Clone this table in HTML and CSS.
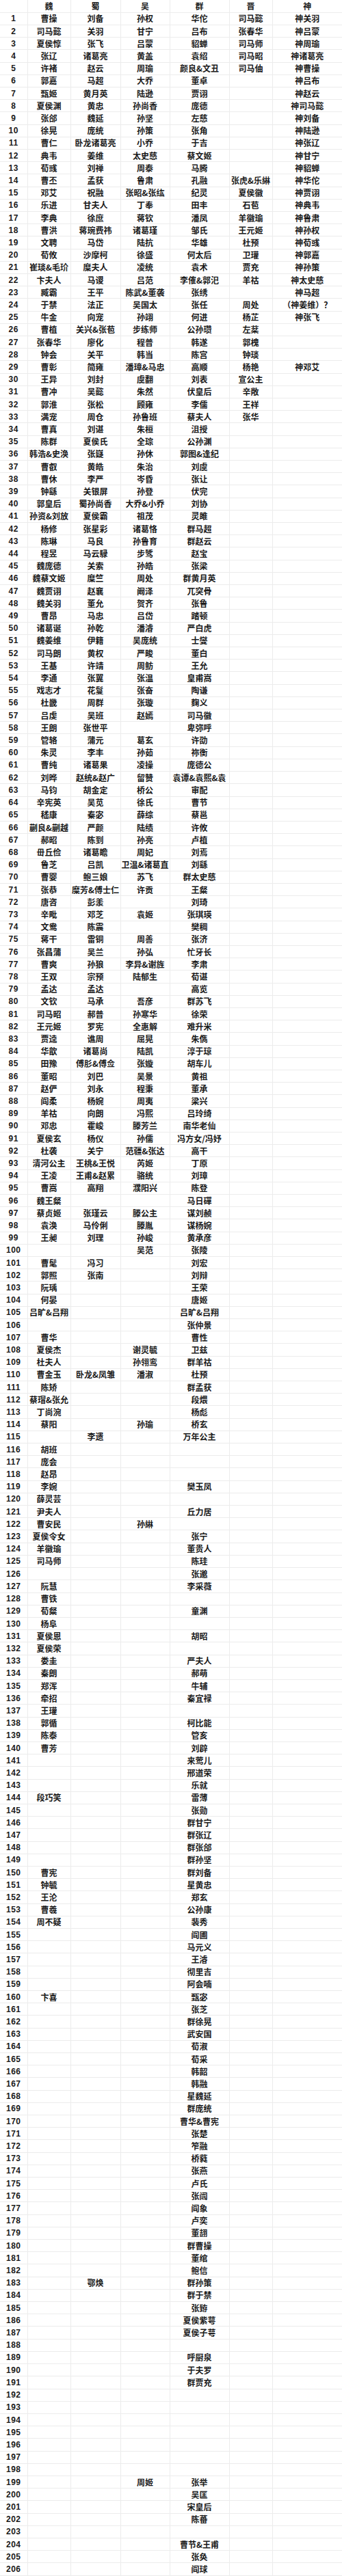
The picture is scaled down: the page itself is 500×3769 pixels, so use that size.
FILE: index.html
```html
<!DOCTYPE html>
<html lang="zh">
<head>
<meta charset="utf-8">
<title>武将列表</title>
<link rel="stylesheet" href="styles.css">
</head>
<body>
<table class="sheet">
<colgroup><col class="c-no"><col class="c-wei"><col class="c-shu"><col class="c-wu"><col class="c-qun"><col class="c-jin"><col class="c-shen"></colgroup>
<thead>
<tr><th></th><th>魏</th><th>蜀</th><th>吴</th><th>群</th><th>晋</th><th>神</th></tr>
</thead>
<tbody>
<tr><td>1</td><td>曹操</td><td>刘备</td><td>孙权</td><td>华佗</td><td>司马懿</td><td>神关羽</td></tr>
<tr><td>2</td><td>司马懿</td><td>关羽</td><td>甘宁</td><td>吕布</td><td>张春华</td><td>神吕蒙</td></tr>
<tr><td>3</td><td>夏侯惇</td><td>张飞</td><td>吕蒙</td><td>貂蝉</td><td>司马师</td><td>神周瑜</td></tr>
<tr><td>4</td><td>张辽</td><td>诸葛亮</td><td>黄盖</td><td>袁绍</td><td>司马昭</td><td>神诸葛亮</td></tr>
<tr><td>5</td><td>许褚</td><td>赵云</td><td>周瑜</td><td>颜良&amp;文丑</td><td>司马伷</td><td>神曹操</td></tr>
<tr><td>6</td><td>郭嘉</td><td>马超</td><td>大乔</td><td>董卓</td><td></td><td>神吕布</td></tr>
<tr><td>7</td><td>甄姬</td><td>黄月英</td><td>陆逊</td><td>贾诩</td><td></td><td>神赵云</td></tr>
<tr><td>8</td><td>夏侯渊</td><td>黄忠</td><td>孙尚香</td><td>庞德</td><td></td><td>神司马懿</td></tr>
<tr><td>9</td><td>张郃</td><td>魏延</td><td>孙坚</td><td>左慈</td><td></td><td>神刘备</td></tr>
<tr><td>10</td><td>徐晃</td><td>庞统</td><td>孙策</td><td>张角</td><td></td><td>神陆逊</td></tr>
<tr><td>11</td><td>曹仁</td><td>卧龙诸葛亮</td><td>小乔</td><td>于吉</td><td></td><td>神张辽</td></tr>
<tr><td>12</td><td>典韦</td><td>姜维</td><td>太史慈</td><td>蔡文姬</td><td></td><td>神甘宁</td></tr>
<tr><td>13</td><td>荀彧</td><td>刘禅</td><td>周泰</td><td>马腾</td><td></td><td>神貂蝉</td></tr>
<tr><td>14</td><td>曹丕</td><td>孟获</td><td>鲁肃</td><td>孔融</td><td>张虎&amp;乐綝</td><td>神华佗</td></tr>
<tr><td>15</td><td>邓艾</td><td>祝融</td><td>张昭&amp;张纮</td><td>纪灵</td><td>夏侯徽</td><td>神贾诩</td></tr>
<tr><td>16</td><td>乐进</td><td>甘夫人</td><td>丁奉</td><td>田丰</td><td>石苞</td><td>神典韦</td></tr>
<tr><td>17</td><td>李典</td><td>徐庶</td><td>蒋钦</td><td>潘凤</td><td>羊徽瑜</td><td>神鲁肃</td></tr>
<tr><td>18</td><td>曹洪</td><td>蒋琬费祎</td><td>诸葛瑾</td><td>邹氏</td><td>王元姬</td><td>神孙权</td></tr>
<tr><td>19</td><td>文聘</td><td>马岱</td><td>陆抗</td><td>华雄</td><td>杜预</td><td>神荀彧</td></tr>
<tr><td>20</td><td>荀攸</td><td>沙摩柯</td><td>徐盛</td><td>何太后</td><td>卫瓘</td><td>神郭嘉</td></tr>
<tr><td>21</td><td>崔琰&amp;毛玠</td><td>糜夫人</td><td>凌统</td><td>袁术</td><td>贾充</td><td>神孙策</td></tr>
<tr><td>22</td><td>卞夫人</td><td>马谡</td><td>吕范</td><td>李傕&amp;郭汜</td><td>羊祜</td><td>神太史慈</td></tr>
<tr><td>23</td><td>臧霸</td><td>王平</td><td>陈武&amp;董袭</td><td>张绣</td><td></td><td>神马超</td></tr>
<tr><td>24</td><td>于禁</td><td>法正</td><td>吴国太</td><td>张任</td><td>周处</td><td>（神姜维）？</td></tr>
<tr><td>25</td><td>牛金</td><td>向宠</td><td>孙翊</td><td>何进</td><td>杨芷</td><td>神张飞</td></tr>
<tr><td>26</td><td>曹植</td><td>关兴&amp;张苞</td><td>步练师</td><td>公孙瓒</td><td>左棻</td><td></td></tr>
<tr><td>27</td><td>张春华</td><td>廖化</td><td>程普</td><td>韩遂</td><td>郭槐</td><td></td></tr>
<tr><td>28</td><td>钟会</td><td>关平</td><td>韩当</td><td>陈宫</td><td>钟琰</td><td></td></tr>
<tr><td>29</td><td>曹彰</td><td>简雍</td><td>潘璋&amp;马忠</td><td>高顺</td><td>杨艳</td><td>神邓艾</td></tr>
<tr><td>30</td><td>王异</td><td>刘封</td><td>虞翻</td><td>刘表</td><td>宣公主</td><td></td></tr>
<tr><td>31</td><td>曹冲</td><td>吴懿</td><td>朱然</td><td>伏皇后</td><td>辛敞</td><td></td></tr>
<tr><td>32</td><td>郭淮</td><td>张松</td><td>顾雍</td><td>李儒</td><td>王祥</td><td></td></tr>
<tr><td>33</td><td>满宠</td><td>周仓</td><td>孙鲁班</td><td>蔡夫人</td><td>张华</td><td></td></tr>
<tr><td>34</td><td>曹真</td><td>刘谌</td><td>朱桓</td><td>沮授</td><td></td><td></td></tr>
<tr><td>35</td><td>陈群</td><td>夏侯氏</td><td>全琮</td><td>公孙渊</td><td></td><td></td></tr>
<tr><td>36</td><td>韩浩&amp;史涣</td><td>张嶷</td><td>孙休</td><td>郭图&amp;逢纪</td><td></td><td></td></tr>
<tr><td>37</td><td>曹叡</td><td>黄皓</td><td>朱治</td><td>刘虞</td><td></td><td></td></tr>
<tr><td>38</td><td>曹休</td><td>李严</td><td>岑昏</td><td>张让</td><td></td><td></td></tr>
<tr><td>39</td><td>钟繇</td><td>关银屏</td><td>孙登</td><td>伏完</td><td></td><td></td></tr>
<tr><td>40</td><td>郭皇后</td><td>蜀孙尚香</td><td>大乔&amp;小乔</td><td>刘协</td><td></td><td></td></tr>
<tr><td>41</td><td>孙资&amp;刘放</td><td>夏侯霸</td><td>祖茂</td><td>灵雎</td><td></td><td></td></tr>
<tr><td>42</td><td>杨修</td><td>张星彩</td><td>诸葛恪</td><td>群马超</td><td></td><td></td></tr>
<tr><td>43</td><td>陈琳</td><td>马良</td><td>孙鲁育</td><td>群赵云</td><td></td><td></td></tr>
<tr><td>44</td><td>程昱</td><td>马云騄</td><td>步骘</td><td>赵宝</td><td></td><td></td></tr>
<tr><td>45</td><td>魏庞德</td><td>关索</td><td>孙皓</td><td>张梁</td><td></td><td></td></tr>
<tr><td>46</td><td>魏蔡文姬</td><td>糜竺</td><td>周处</td><td>群黄月英</td><td></td><td></td></tr>
<tr><td>47</td><td>魏贾诩</td><td>赵襄</td><td>阚泽</td><td>兀突骨</td><td></td><td></td></tr>
<tr><td>48</td><td>魏关羽</td><td>董允</td><td>贺齐</td><td>张鲁</td><td></td><td></td></tr>
<tr><td>49</td><td>曹昂</td><td>马忠</td><td>吕岱</td><td>踏顿</td><td></td><td></td></tr>
<tr><td>50</td><td>诸葛诞</td><td>孙乾</td><td>潘濬</td><td>严白虎</td><td></td><td></td></tr>
<tr><td>51</td><td>魏姜维</td><td>伊籍</td><td>吴庞统</td><td>士燮</td><td></td><td></td></tr>
<tr><td>52</td><td>司马朗</td><td>黄权</td><td>严畯</td><td>董白</td><td></td><td></td></tr>
<tr><td>53</td><td>王基</td><td>许靖</td><td>周鲂</td><td>王允</td><td></td><td></td></tr>
<tr><td>54</td><td>李通</td><td>张翼</td><td>张温</td><td>皇甫嵩</td><td></td><td></td></tr>
<tr><td>55</td><td>戏志才</td><td>花鬘</td><td>张奋</td><td>陶谦</td><td></td><td></td></tr>
<tr><td>56</td><td>杜畿</td><td>周群</td><td>张璇</td><td>麴义</td><td></td><td></td></tr>
<tr><td>57</td><td>吕虔</td><td>吴班</td><td>赵嫣</td><td>司马徽</td><td></td><td></td></tr>
<tr><td>58</td><td>王朗</td><td>张世平</td><td></td><td>卑弥呼</td><td></td><td></td></tr>
<tr><td>59</td><td>管辂</td><td>蒲元</td><td>葛玄</td><td>许劭</td><td></td><td></td></tr>
<tr><td>60</td><td>朱灵</td><td>李丰</td><td>孙茹</td><td>祢衡</td><td></td><td></td></tr>
<tr><td>61</td><td>曹纯</td><td>诸葛果</td><td>凌操</td><td>庞德公</td><td></td><td></td></tr>
<tr><td>62</td><td>刘晔</td><td>赵统&amp;赵广</td><td>留赞</td><td>袁谭&amp;袁熙&amp;袁</td><td></td><td></td></tr>
<tr><td>63</td><td>马钧</td><td>胡金定</td><td>桥公</td><td>审配</td><td></td><td></td></tr>
<tr><td>64</td><td>辛宪英</td><td>吴苋</td><td>徐氏</td><td>曹节</td><td></td><td></td></tr>
<tr><td>65</td><td>嵇康</td><td>秦宓</td><td>薛综</td><td>蔡邕</td><td></td><td></td></tr>
<tr><td>66</td><td>蒯良&amp;蒯越</td><td>严颜</td><td>陆绩</td><td>许攸</td><td></td><td></td></tr>
<tr><td>67</td><td>郝昭</td><td>陈到</td><td>孙亮</td><td>卢植</td><td></td><td></td></tr>
<tr><td>68</td><td>毌丘俭</td><td>诸葛瞻</td><td>周妃</td><td>刘焉</td><td></td><td></td></tr>
<tr><td>69</td><td>鲁芝</td><td>吕凯</td><td>卫温&amp;诸葛直</td><td>刘繇</td><td></td><td></td></tr>
<tr><td>70</td><td>曹婴</td><td>鲍三娘</td><td>苏飞</td><td>群太史慈</td><td></td><td></td></tr>
<tr><td>71</td><td>张恭</td><td>糜芳&amp;傅士仁</td><td>许贡</td><td>王粲</td><td></td><td></td></tr>
<tr><td>72</td><td>唐咨</td><td>彭羕</td><td></td><td>刘琦</td><td></td><td></td></tr>
<tr><td>73</td><td>辛毗</td><td>邓芝</td><td>袁姬</td><td>张琪瑛</td><td></td><td></td></tr>
<tr><td>74</td><td>文鸯</td><td>陈震</td><td></td><td>樊稠</td><td></td><td></td></tr>
<tr><td>75</td><td>蒋干</td><td>雷铜</td><td>周善</td><td>张济</td><td></td><td></td></tr>
<tr><td>76</td><td>张昌蒲</td><td>吴兰</td><td>孙弘</td><td>忙牙长</td><td></td><td></td></tr>
<tr><td>77</td><td>曹爽</td><td>孙狼</td><td>李异&amp;谢旌</td><td>李肃</td><td></td><td></td></tr>
<tr><td>78</td><td>王双</td><td>宗预</td><td>陆郁生</td><td>荀谌</td><td></td><td></td></tr>
<tr><td>79</td><td>孟达</td><td>孟达</td><td></td><td>高览</td><td></td><td></td></tr>
<tr><td>80</td><td>文钦</td><td>马承</td><td>吾彦</td><td>群苏飞</td><td></td><td></td></tr>
<tr><td>81</td><td>司马昭</td><td>郝普</td><td>孙寒华</td><td>徐荣</td><td></td><td></td></tr>
<tr><td>82</td><td>王元姬</td><td>罗宪</td><td>全惠解</td><td>难升米</td><td></td><td></td></tr>
<tr><td>83</td><td>贾逵</td><td>谯周</td><td>屈晃</td><td>朱儁</td><td></td><td></td></tr>
<tr><td>84</td><td>华歆</td><td>诸葛尚</td><td>陆凯</td><td>淳于琼</td><td></td><td></td></tr>
<tr><td>85</td><td>田豫</td><td>傅肜&amp;傅佥</td><td>张嫙</td><td>胡车儿</td><td></td><td></td></tr>
<tr><td>86</td><td>董昭</td><td>刘巴</td><td>吴景</td><td>黄祖</td><td></td><td></td></tr>
<tr><td>87</td><td>赵俨</td><td>刘永</td><td>程秉</td><td>董承</td><td></td><td></td></tr>
<tr><td>88</td><td>阎柔</td><td>杨婉</td><td>周夷</td><td>梁兴</td><td></td><td></td></tr>
<tr><td>89</td><td>羊祜</td><td>向朗</td><td>冯熙</td><td>吕玲绮</td><td></td><td></td></tr>
<tr><td>90</td><td>邓忠</td><td>霍峻</td><td>滕芳兰</td><td>南华老仙</td><td></td><td></td></tr>
<tr><td>91</td><td>夏侯玄</td><td>杨仪</td><td>孙儒</td><td>冯方女/冯妤</td><td></td><td></td></tr>
<tr><td>92</td><td>杜袭</td><td>关宁</td><td>范疆&amp;张达</td><td>高干</td><td></td><td></td></tr>
<tr><td>93</td><td>清河公主</td><td>王桃&amp;王悦</td><td>芮姬</td><td>丁原</td><td></td><td></td></tr>
<tr><td>94</td><td>王凌</td><td>王甫&amp;赵累</td><td>骆统</td><td>刘璋</td><td></td><td></td></tr>
<tr><td>95</td><td>曹嵩</td><td>高翔</td><td>濮阳兴</td><td>陈登</td><td></td><td></td></tr>
<tr><td>96</td><td>魏王粲</td><td></td><td></td><td>马日磾</td><td></td><td></td></tr>
<tr><td>97</td><td>蔡贞姬</td><td>张瑾云</td><td>滕公主</td><td>谋刘赪</td><td></td><td></td></tr>
<tr><td>98</td><td>袁涣</td><td>马伶俐</td><td>滕胤</td><td>谋杨婉</td><td></td><td></td></tr>
<tr><td>99</td><td>王昶</td><td>刘理</td><td>孙峻</td><td>黄承彦</td><td></td><td></td></tr>
<tr><td>100</td><td></td><td></td><td>吴范</td><td>张陵</td><td></td><td></td></tr>
<tr><td>101</td><td>曹髦</td><td>冯习</td><td></td><td>刘宏</td><td></td><td></td></tr>
<tr><td>102</td><td>郭照</td><td>张南</td><td></td><td>刘辩</td><td></td><td></td></tr>
<tr><td>103</td><td>阮瑀</td><td></td><td></td><td>王荣</td><td></td><td></td></tr>
<tr><td>104</td><td>何晏</td><td></td><td></td><td>唐姬</td><td></td><td></td></tr>
<tr><td>105</td><td>吕旷&amp;吕翔</td><td></td><td></td><td>吕旷&amp;吕翔</td><td></td><td></td></tr>
<tr><td>106</td><td></td><td></td><td></td><td>张仲景</td><td></td><td></td></tr>
<tr><td>107</td><td>曹华</td><td></td><td></td><td>曹性</td><td></td><td></td></tr>
<tr><td>108</td><td>夏侯杰</td><td></td><td>谢灵毓</td><td>卫兹</td><td></td><td></td></tr>
<tr><td>109</td><td>杜夫人</td><td></td><td>孙翎鸾</td><td>群羊祜</td><td></td><td></td></tr>
<tr><td>110</td><td>曹金玉</td><td>卧龙&amp;凤雏</td><td>潘淑</td><td>杜预</td><td></td><td></td></tr>
<tr><td>111</td><td>陈矫</td><td></td><td></td><td>群孟获</td><td></td><td></td></tr>
<tr><td>112</td><td>蔡瑁&amp;张允</td><td></td><td></td><td>段煨</td><td></td><td></td></tr>
<tr><td>113</td><td>丁尚涴</td><td></td><td></td><td>杨彪</td><td></td><td></td></tr>
<tr><td>114</td><td>蔡阳</td><td></td><td>孙瑜</td><td>桥玄</td><td></td><td></td></tr>
<tr><td>115</td><td></td><td>李遗</td><td></td><td>万年公主</td><td></td><td></td></tr>
<tr><td>116</td><td>胡班</td><td></td><td></td><td></td><td></td><td></td></tr>
<tr><td>117</td><td>庞会</td><td></td><td></td><td></td><td></td><td></td></tr>
<tr><td>118</td><td>赵昂</td><td></td><td></td><td></td><td></td><td></td></tr>
<tr><td>119</td><td>李婉</td><td></td><td></td><td>樊玉凤</td><td></td><td></td></tr>
<tr><td>120</td><td>薛灵芸</td><td></td><td></td><td></td><td></td><td></td></tr>
<tr><td>121</td><td>尹夫人</td><td></td><td></td><td>丘力居</td><td></td><td></td></tr>
<tr><td>122</td><td>曹安民</td><td></td><td>孙綝</td><td></td><td></td><td></td></tr>
<tr><td>123</td><td>夏侯令女</td><td></td><td></td><td>张宁</td><td></td><td></td></tr>
<tr><td>124</td><td>羊徽瑜</td><td></td><td></td><td>董贵人</td><td></td><td></td></tr>
<tr><td>125</td><td>司马师</td><td></td><td></td><td>陈珪</td><td></td><td></td></tr>
<tr><td>126</td><td></td><td></td><td></td><td>张邈</td><td></td><td></td></tr>
<tr><td>127</td><td>阮慧</td><td></td><td></td><td>李采薇</td><td></td><td></td></tr>
<tr><td>128</td><td>曹铁</td><td></td><td></td><td></td><td></td><td></td></tr>
<tr><td>129</td><td>荀粲</td><td></td><td></td><td>童渊</td><td></td><td></td></tr>
<tr><td>130</td><td>杨阜</td><td></td><td></td><td></td><td></td><td></td></tr>
<tr><td>131</td><td>夏侯恩</td><td></td><td></td><td>胡昭</td><td></td><td></td></tr>
<tr><td>132</td><td>夏侯荣</td><td></td><td></td><td></td><td></td><td></td></tr>
<tr><td>133</td><td>娄圭</td><td></td><td></td><td>严夫人</td><td></td><td></td></tr>
<tr><td>134</td><td>秦朗</td><td></td><td></td><td>郝萌</td><td></td><td></td></tr>
<tr><td>135</td><td>郑浑</td><td></td><td></td><td>牛辅</td><td></td><td></td></tr>
<tr><td>136</td><td>牵招</td><td></td><td></td><td>秦宜禄</td><td></td><td></td></tr>
<tr><td>137</td><td>王瓘</td><td></td><td></td><td></td><td></td><td></td></tr>
<tr><td>138</td><td>郭循</td><td></td><td></td><td>柯比能</td><td></td><td></td></tr>
<tr><td>139</td><td>陈泰</td><td></td><td></td><td>管亥</td><td></td><td></td></tr>
<tr><td>140</td><td>曹芳</td><td></td><td></td><td>刘辟</td><td></td><td></td></tr>
<tr><td>141</td><td></td><td></td><td></td><td>来莺儿</td><td></td><td></td></tr>
<tr><td>142</td><td></td><td></td><td></td><td>邢道荣</td><td></td><td></td></tr>
<tr><td>143</td><td></td><td></td><td></td><td>乐就</td><td></td><td></td></tr>
<tr><td>144</td><td>段巧笑</td><td></td><td></td><td>雷薄</td><td></td><td></td></tr>
<tr><td>145</td><td></td><td></td><td></td><td>张勋</td><td></td><td></td></tr>
<tr><td>146</td><td></td><td></td><td></td><td>群甘宁</td><td></td><td></td></tr>
<tr><td>147</td><td></td><td></td><td></td><td>群张辽</td><td></td><td></td></tr>
<tr><td>148</td><td></td><td></td><td></td><td>群张郃</td><td></td><td></td></tr>
<tr><td>149</td><td></td><td></td><td></td><td>群孙坚</td><td></td><td></td></tr>
<tr><td>150</td><td>曹宪</td><td></td><td></td><td>群刘备</td><td></td><td></td></tr>
<tr><td>151</td><td>钟毓</td><td></td><td></td><td>星黄忠</td><td></td><td></td></tr>
<tr><td>152</td><td>王沦</td><td></td><td></td><td>郑玄</td><td></td><td></td></tr>
<tr><td>153</td><td>曹羲</td><td></td><td></td><td>公孙康</td><td></td><td></td></tr>
<tr><td>154</td><td>周不疑</td><td></td><td></td><td>裴秀</td><td></td><td></td></tr>
<tr><td>155</td><td></td><td></td><td></td><td>阎圃</td><td></td><td></td></tr>
<tr><td>156</td><td></td><td></td><td></td><td>马元义</td><td></td><td></td></tr>
<tr><td>157</td><td></td><td></td><td></td><td>王濬</td><td></td><td></td></tr>
<tr><td>158</td><td></td><td></td><td></td><td>彻里吉</td><td></td><td></td></tr>
<tr><td>159</td><td></td><td></td><td></td><td>阿会喃</td><td></td><td></td></tr>
<tr><td>160</td><td>卞喜</td><td></td><td></td><td>甄宓</td><td></td><td></td></tr>
<tr><td>161</td><td></td><td></td><td></td><td>张芝</td><td></td><td></td></tr>
<tr><td>162</td><td></td><td></td><td></td><td>群徐晃</td><td></td><td></td></tr>
<tr><td>163</td><td></td><td></td><td></td><td>武安国</td><td></td><td></td></tr>
<tr><td>164</td><td></td><td></td><td></td><td>荀淑</td><td></td><td></td></tr>
<tr><td>165</td><td></td><td></td><td></td><td>荀采</td><td></td><td></td></tr>
<tr><td>166</td><td></td><td></td><td></td><td>韩韶</td><td></td><td></td></tr>
<tr><td>167</td><td></td><td></td><td></td><td>韩融</td><td></td><td></td></tr>
<tr><td>168</td><td></td><td></td><td></td><td>星魏延</td><td></td><td></td></tr>
<tr><td>169</td><td></td><td></td><td></td><td>群庞统</td><td></td><td></td></tr>
<tr><td>170</td><td></td><td></td><td></td><td>曹华&amp;曹宪</td><td></td><td></td></tr>
<tr><td>171</td><td></td><td></td><td></td><td>张楚</td><td></td><td></td></tr>
<tr><td>172</td><td></td><td></td><td></td><td>笮融</td><td></td><td></td></tr>
<tr><td>173</td><td></td><td></td><td></td><td>桥蕤</td><td></td><td></td></tr>
<tr><td>174</td><td></td><td></td><td></td><td>张燕</td><td></td><td></td></tr>
<tr><td>175</td><td></td><td></td><td></td><td>卢氏</td><td></td><td></td></tr>
<tr><td>176</td><td></td><td></td><td></td><td>张闿</td><td></td><td></td></tr>
<tr><td>177</td><td></td><td></td><td></td><td>阎象</td><td></td><td></td></tr>
<tr><td>178</td><td></td><td></td><td></td><td>卢奕</td><td></td><td></td></tr>
<tr><td>179</td><td></td><td></td><td></td><td>董翓</td><td></td><td></td></tr>
<tr><td>180</td><td></td><td></td><td></td><td>群曹操</td><td></td><td></td></tr>
<tr><td>181</td><td></td><td></td><td></td><td>董绾</td><td></td><td></td></tr>
<tr><td>182</td><td></td><td></td><td></td><td>鲍信</td><td></td><td></td></tr>
<tr><td>183</td><td></td><td>鄂焕</td><td></td><td>群孙策</td><td></td><td></td></tr>
<tr><td>184</td><td></td><td></td><td></td><td>群于禁</td><td></td><td></td></tr>
<tr><td>185</td><td></td><td></td><td></td><td>张臶</td><td></td><td></td></tr>
<tr><td>186</td><td></td><td></td><td></td><td>夏侯紫萼</td><td></td><td></td></tr>
<tr><td>187</td><td></td><td></td><td></td><td>夏侯子萼</td><td></td><td></td></tr>
<tr><td>188</td><td></td><td></td><td></td><td></td><td></td><td></td></tr>
<tr><td>189</td><td></td><td></td><td></td><td>呼厨泉</td><td></td><td></td></tr>
<tr><td>190</td><td></td><td></td><td></td><td>于夫罗</td><td></td><td></td></tr>
<tr><td>191</td><td></td><td></td><td></td><td>群贾充</td><td></td><td></td></tr>
<tr><td>192</td><td></td><td></td><td></td><td></td><td></td><td></td></tr>
<tr><td>193</td><td></td><td></td><td></td><td></td><td></td><td></td></tr>
<tr><td>194</td><td></td><td></td><td></td><td></td><td></td><td></td></tr>
<tr><td>195</td><td></td><td></td><td></td><td></td><td></td><td></td></tr>
<tr><td>196</td><td></td><td></td><td></td><td></td><td></td><td></td></tr>
<tr><td>197</td><td></td><td></td><td></td><td></td><td></td><td></td></tr>
<tr><td>198</td><td></td><td></td><td></td><td></td><td></td><td></td></tr>
<tr><td>199</td><td></td><td></td><td>周姬</td><td>张举</td><td></td><td></td></tr>
<tr><td>200</td><td></td><td></td><td></td><td>吴匡</td><td></td><td></td></tr>
<tr><td>201</td><td></td><td></td><td></td><td>宋皇后</td><td></td><td></td></tr>
<tr><td>202</td><td></td><td></td><td></td><td>陈蕃</td><td></td><td></td></tr>
<tr><td>203</td><td></td><td></td><td></td><td></td><td></td><td></td></tr>
<tr><td>204</td><td></td><td></td><td></td><td>曹节&amp;王甫</td><td></td><td></td></tr>
<tr><td>205</td><td></td><td></td><td></td><td>张奂</td><td></td><td></td></tr>
<tr><td>206</td><td></td><td></td><td></td><td>阎球</td><td></td><td></td></tr>
</tbody>
</table>
</body>
</html>
```

FILE: styles.css
```css
html, body {
  margin: 0;
  padding: 0;
  background: #ffffff;
}

.sheet {
  width: 500px;
  table-layout: fixed;
  border-collapse: collapse;
  font-family: "Noto Sans CJK SC", "Liberation Serif", serif;
  font-size: 12px;
  font-weight: 700;
  color: #1a1a1a;
}

.c-no { width: 40px; }
.c-wei { width: 63px; }
.c-shu { width: 73px; }
.c-wu { width: 72px; }
.c-qun { width: 87px; }
.c-jin { width: 63px; }
.c-shen { width: 102px; }

.sheet tr {
  height: 18.2077px;
}

.sheet th,
.sheet td {
  padding: 0;
  border: 1px solid #ececec;
  text-align: center;
  vertical-align: middle;
  white-space: nowrap;
  line-height: 14px;
}

.sheet th {
  font-weight: 700;
}

.sheet td:first-child {
  font-family: "Liberation Sans", sans-serif;
  font-size: 12px;
  letter-spacing: 0.5px;
}

.sheet tr > :first-child { border-left: none; }
.sheet tr > :last-child { border-right: none; }
.sheet thead th { border-top: none; }
```
